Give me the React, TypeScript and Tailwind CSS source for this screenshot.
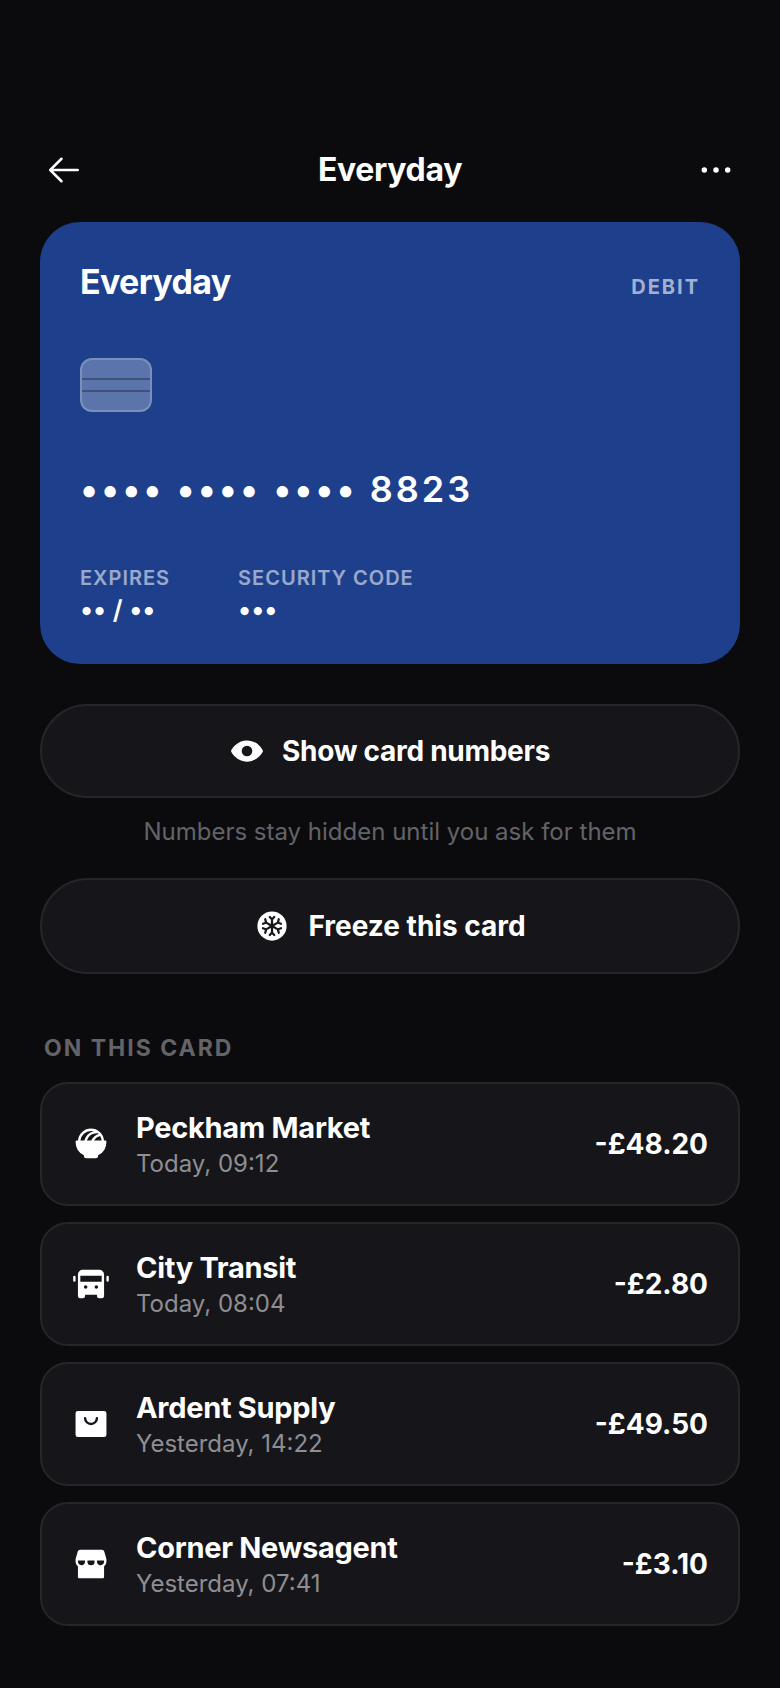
import { useState } from "react";
import type { IconType } from "react-icons";
import {
  PiArrowLeft,
  PiBowlFoodFill,
  PiBusFill,
  PiDotsThreeBold,
  PiEyeFill,
  PiShoppingBagFill,
  PiSnowflakeFill,
  PiStorefrontFill,
} from "react-icons/pi";

type Transaction = {
  name: string;
  time: string;
  amount: string;
  icon: IconType;
};

const transactions: Transaction[] = [
  { name: "Peckham Market", time: "Today, 09:12", amount: "-£48.20", icon: PiBowlFoodFill },
  { name: "City Transit", time: "Today, 08:04", amount: "-£2.80", icon: PiBusFill },
  { name: "Ardent Supply", time: "Yesterday, 14:22", amount: "-£49.50", icon: PiShoppingBagFill },
  { name: "Corner Newsagent", time: "Yesterday, 07:41", amount: "-£3.10", icon: PiStorefrontFill },
];

function BankCard() {
  return (
    <section className="flex aspect-[700/442] flex-col rounded-[40px] bg-[#1d3f8c] px-10 pt-10 pb-[38px]">
      <div className="flex items-baseline justify-between">
        <h2 className="text-[34px] leading-10 font-bold tracking-[-0.02em]">Everyday</h2>
        <span className="text-[20px] font-bold tracking-[2px] text-white/60">DEBIT</span>
      </div>

      {/* Chip */}
      <div className="mt-14 flex h-[54px] w-[72px] flex-col justify-center gap-[10px] rounded-xl border-2 border-white/20 bg-white/28">
        <div className="h-[2px] bg-black/30" />
        <div className="h-[2px] bg-black/30" />
      </div>

      <p className="mt-auto text-[36px] leading-[46px] font-semibold tracking-[3px]">
        •••• •••• •••• 8823
      </p>

      <dl className="mt-[54px] flex gap-[68px]">
        <div>
          <dt className="text-[20px] leading-6 font-semibold tracking-[1px] text-white/55">EXPIRES</dt>
          <dd className="mt-1 text-[26px] leading-8 font-semibold">•• / ••</dd>
        </div>
        <div>
          <dt className="text-[20px] leading-6 font-semibold tracking-[1px] text-white/55">SECURITY CODE</dt>
          <dd className="mt-1 text-[26px] leading-8 font-semibold">•••</dd>
        </div>
      </dl>
    </section>
  );
}

function TransactionRow({ name, time, amount, icon: Icon }: Transaction) {
  return (
    <li className="flex h-[124px] items-center gap-[26px] rounded-[28px] border-2 border-[#26262a] bg-[#16161a] px-[30px]">
      <Icon className="size-[38px] shrink-0" />
      <div className="min-w-0 flex-1 pt-1">
        <div className="text-[29px] leading-9 font-bold tracking-[-0.01em]">{name}</div>
        <div className="text-[24px] leading-9 text-[#8e8e93]">{time}</div>
      </div>
      <span className="text-[28px] font-bold">{amount}</span>
    </li>
  );
}

export default function App() {
  const [frozen, setFrozen] = useState(false);

  return (
    <main className="min-h-screen bg-[#0b0b0d] px-10 pt-[146px] pb-[62px] font-['Inter',sans-serif] text-white">
      <header className="mb-7 flex h-12 items-center justify-between">
        <button aria-label="Back" className="flex size-12 items-center justify-center">
          <PiArrowLeft className="size-10" />
        </button>
        <h1 className="text-[32px] font-bold tracking-[-0.01em]">Everyday</h1>
        <button aria-label="More options" className="flex size-12 items-center justify-center">
          <PiDotsThreeBold className="size-11" />
        </button>
      </header>

      <BankCard />

      <button className="mt-10 flex h-[94px] w-full items-center justify-center gap-[18px] rounded-full border-2 border-[#26262a] bg-[#16161a] text-[28px] font-bold tracking-[-0.01em]">
        <PiEyeFill className="size-[34px]" />
        Show card numbers
      </button>
      <p className="mt-4 text-center text-[24px] leading-9 text-[#636368]">
        Numbers stay hidden until you ask for them
      </p>
      <button
        aria-pressed={frozen}
        onClick={() => setFrozen(!frozen)}
        className="mt-7 flex h-[96px] w-full items-center justify-center gap-[18px] rounded-full border-2 border-[#26262a] bg-[#16161a] text-[28px] font-bold"
      >
        <PiSnowflakeFill className="size-9" />
        Freeze this card
      </button>

      <h2 className="mt-14 px-1 text-[23px] leading-9 font-bold tracking-[2px] text-[#636368]">
        ON THIS CARD
      </h2>
      <ul className="mt-4 flex flex-col gap-4">
        {transactions.map((t) => (
          <TransactionRow key={t.name} {...t} />
        ))}
      </ul>
    </main>
  );
}
